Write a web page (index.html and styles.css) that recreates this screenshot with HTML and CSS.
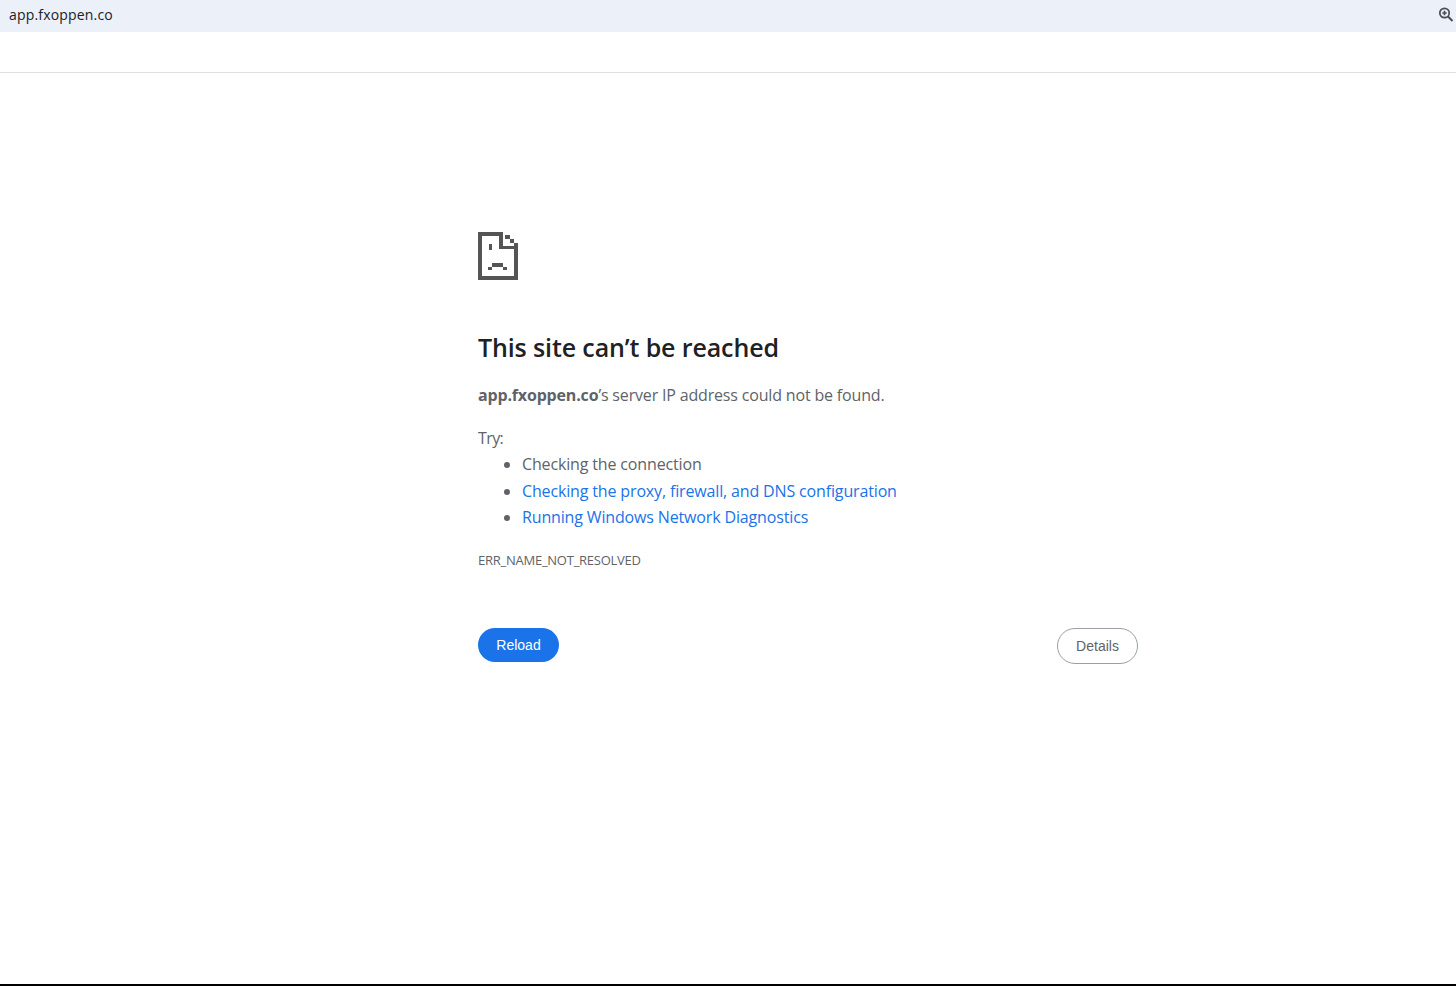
FILE: index.html
```html
<!DOCTYPE html>
<html lang="en">
<head>
    <meta charset="UTF-8">
    <meta name="viewport" content="width=device-width, initial-scale=1.0">
    <title>app.fxoppen.co</title>
    <link rel="stylesheet" href="styles.css">
</head>
<body>
    <div class="page">
        <div class="address-bar">
            <span class="address-text">app.fxoppen.co</span>
            <svg class="zoom-icon" width="16" height="16" viewBox="0 0 16 16" aria-hidden="true">
                <circle cx="6.5" cy="7" r="4.7" fill="none" stroke="#4a4d52" stroke-width="1.7"/>
                <path d="M10 10.5l4.5 4.5" stroke="#4a4d52" stroke-width="2" fill="none"/>
                <path d="M4.3 7h4.4M6.5 4.8v4.4" stroke="#4a4d52" stroke-width="1.6" fill="none"/>
            </svg>
        </div>
        <div class="toolbar"></div>

        <main class="content">
            <div class="wrapper">
                <svg class="sad-icon" width="40" height="48" viewBox="0 0 40 48" aria-hidden="true">
                    <path fill="#555" fill-rule="evenodd" d="M0 0h25v14h15v34H0zM4 4v40h32V17H21V4z"/>
                    <path fill="#555" d="M27 3h5v4h-5zM32 7h4v4h-4zM36 11h4v4h-4z"/>
                    <path fill="#555" d="M11 12h3v6h-3zM14 31h11v4h4v3h-4v-3H14v3h-4v-3h4z"/>
                </svg>

                <h1 class="title">This site can’t be reached</h1>
                <p class="summary"><strong>app.fxoppen.co</strong>’s server IP address could not be found.</p>

                <p class="try">Try:</p>
                <ul class="suggestions">
                    <li>Checking the connection</li>
                    <li><a href="#">Checking the proxy, firewall, and DNS configuration</a></li>
                    <li><a href="#">Running Windows Network Diagnostics</a></li>
                </ul>

                <div class="error-code">ERR_NAME_NOT_RESOLVED</div>

                <div class="button-group">
                    <button class="reload">Reload</button>
                    <button class="details">Details</button>
                </div>
            </div>
        </main>
    </div>
</body>
</html>
```

FILE: styles.css
```css
html, body {
    margin: 0;
    padding: 0;
    background-color: #fff;
}
body {
    font-family: "Open Sans", "Noto Sans", sans-serif;
    color: #5f6368;
}
.page {
    height: 986px;
    box-sizing: border-box;
    border-bottom: 2px solid #000;
    overflow: hidden;
}
.address-bar {
    height: 32px;
    box-sizing: border-box;
    background-color: #ebf0f9;
    display: flex;
    align-items: center;
    justify-content: space-between;
    padding: 0 2px 4px 9px;
}
.address-text {
    font-size: 14px;
    color: #202124;
    letter-spacing: 0.18px;
}
.zoom-icon {
    display: block;
}
.toolbar {
    height: 40px;
    border-bottom: 1px solid #e0e0e0;
}
.content {
    padding: 159px 0 0 478px;
}
.wrapper {
    width: 660px;
}
.sad-icon {
    display: block;
}
.title {
    margin: 51px 0 0;
    font-size: 25px;
    line-height: 32px;
    font-weight: 600;
    color: #202124;
    letter-spacing: -0.12px;
}
.summary {
    margin: 19px 0 0;
    font-size: 16px;
    line-height: 26px;
    letter-spacing: -0.17px;
}
.summary strong {
    font-weight: 700;
}
.try {
    margin: 17px 0 0;
    font-size: 16px;
    line-height: 26px;
    letter-spacing: -0.6px;
}
.suggestions {
    margin: 0;
    padding: 0 0 0 44px;
    font-size: 16px;
    line-height: 26.5px;
    letter-spacing: -0.15px;
}
.suggestions a {
    color: #1a73e8;
    text-decoration: none;
}
.error-code {
    margin-top: 21px;
    font-size: 13px;
    line-height: 16px;
    letter-spacing: -0.25px;
}
.button-group {
    display: flex;
    justify-content: space-between;
    align-items: flex-start;
    margin-top: 60px;
}
button {
    font-family: "Liberation Sans", Arial, sans-serif;
    font-size: 14px;
    border-radius: 18px;
    cursor: pointer;
}
.reload {
    width: 81px;
    height: 34px;
    background-color: #1a73e8;
    color: #fff;
    border: none;
}
.details {
    width: 81px;
    height: 36px;
    background-color: #fff;
    color: #5f6368;
    border: 1px solid #9aa0a6;
}
```
